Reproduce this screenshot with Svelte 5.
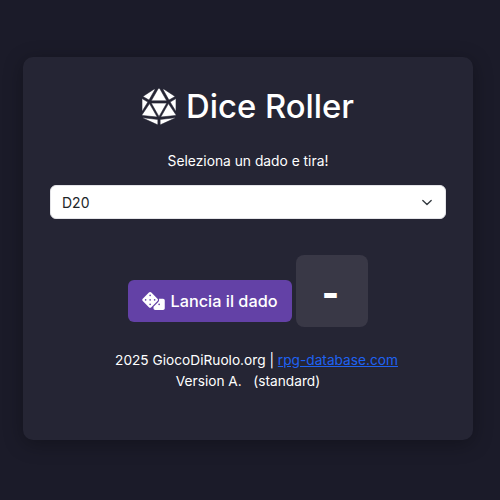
<script>
  let die = $state('D20');
  const dice = ['D4', 'D6', 'D8', 'D10', 'D12', 'D20', 'D100'];
</script>

<main class="page">
  <section class="card">
    <h1>
      <svg class="logo" viewBox="0 0 480 512" aria-hidden="true"><path fill="currentColor" stroke="#252534" stroke-width="8" d="M106.75 215.06L1.2 370.95c-3.08 5 .1 11.5 5.93 12.14l208.26 22.07-108.64-190.1zM7.41 315.43L82.7 193.08 6.06 147.1c-2.67-1.6-6.06.32-6.06 3.43v162.81c0 4.03 5.29 5.53 7.41 2.09zM18.25 423.6l194.4 87.66c5.3 2.45 11.35-1.43 11.35-7.26v-65.67l-203.55-22.3c-4.45-.5-6.23 5.59-2.2 7.57zm81.22-257.78L179.4 22.88c4.34-7.06-3.59-15.25-10.78-11.14L17.81 110.35c-2.47 1.62-2.39 5.26.13 6.78l81.53 48.69zM240 176h109.21L253.63 7.62C250.5 2.54 245.25 0 240 0s-10.5 2.54-13.63 7.62L130.79 176H240zm233.94-28.9l-76.64 45.99 75.29 122.35c2.11 3.44 7.41 1.94 7.41-2.1V150.53c0-3.11-3.39-5.03-6.06-3.43zm-93.41 18.72l81.53-48.7c2.53-1.52 2.6-5.16.13-6.78L311.38 11.74c-7.19-4.11-15.12 4.08-10.78 11.14l79.93 142.94zm-7.28 49.24l-108.64 190.1 208.26-22.07c5.83-.65 9.01-7.14 5.93-12.14L373.25 215.06zM256 438.33V504c0 5.83 6.05 9.71 11.35 7.26l194.4-87.66c4.03-1.98 2.25-8.07-2.2-7.57L256 438.33zM240 208H130.79L240 399.1 349.21 208H240z"/></svg>
      Dice Roller
    </h1>
    <p class="lead">Seleziona un dado e tira!</p>
    <select bind:value={die}>
      {#each dice as d}<option value={d}>{d}</option>{/each}
    </select>
    <div class="roll">
      <button type="button">
        <svg class="dice" viewBox="0 0 640 512" aria-hidden="true"><path fill="currentColor" d="M592 192H473.26c12.69 29.59 7.12 65.2-17 89.32L320 417.58V464c0 26.51 21.49 48 48 48h224c26.51 0 48-21.49 48-48V240c0-26.51-21.49-48-48-48zM480 376c-13.25 0-24-10.75-24-24 0-13.26 10.75-24 24-24s24 10.74 24 24c0 13.25-10.75 24-24 24zm-46.37-186.7L258.7 14.37c-19.16-19.16-50.23-19.16-69.39 0L14.37 189.3c-19.16 19.16-19.16 50.23 0 69.39L189.3 433.63c19.16 19.16 50.23 19.16 69.39 0L433.63 258.7c19.16-19.17 19.16-50.24 0-69.4zM96 248c-13.25 0-24-10.75-24-24 0-13.26 10.75-24 24-24s24 10.74 24 24c0 13.25-10.75 24-24 24zm128 128c-13.25 0-24-10.75-24-24 0-13.26 10.75-24 24-24s24 10.74 24 24c0 13.25-10.75 24-24 24zm0-128c-13.25 0-24-10.75-24-24 0-13.26 10.75-24 24-24s24 10.74 24 24c0 13.25-10.75 24-24 24zm0-128c-13.25 0-24-10.75-24-24 0-13.26 10.75-24 24-24s24 10.74 24 24c0 13.25-10.75 24-24 24zm128 128c-13.25 0-24-10.75-24-24 0-13.26 10.75-24 24-24s24 10.74 24 24c0 13.25-10.75 24-24 24z"/></svg>
        Lancia il dado
      </button>
      <output class="result">-</output>
    </div>
    <footer>
      <div class="credits">2025 GiocoDiRuolo.org | <a href="#top">rpg-database.com</a></div>
      <div>Version A. &nbsp; (standard)</div>
    </footer>
  </section>
</main>

<style>
  :global(body) {
    background: #1b1b29;
  }
  .page {
    box-sizing: border-box;
    height: 500px;
    padding: 57px 27px 0 23px;
    overflow: hidden;
    font-family: Inter, "Liberation Sans", sans-serif;
    color: #fff;
  }
  .card {
    box-sizing: border-box;
    height: 383px;
    padding: 26px 27px;
    background: #252534;
    border-radius: 10px;
    box-shadow: 0 4px 20px rgba(0, 0, 0, 0.3);
    text-align: center;
  }
  h1 {
    display: flex;
    justify-content: center;
    align-items: center;
    gap: 10px;
    margin: 0;
    height: 46px;
    font-size: 32.8px;
    font-weight: 500;
    line-height: 46px;
  }
  .logo {
    width: 34px;
    height: 37px;
  }
  .lead {
    margin: 22px 0 14px;
    font-size: 13.8px;
    line-height: 20px;
  }
  select {
    display: block;
    box-sizing: border-box;
    width: 100%;
    height: 34px;
    padding: 0 11px;
    border: 1px solid #e4e4e8;
    border-radius: 6px;
    background: #fff url("data:image/svg+xml,%3Csvg xmlns='http://www.w3.org/2000/svg' viewBox='0 0 12 8'%3E%3Cpath d='M1 1.5l5 5 5-5' fill='none' stroke='%23343a40' stroke-width='1.6' stroke-linecap='round' stroke-linejoin='round'/%3E%3C/svg%3E") no-repeat right 13px center / 10px 7px;
    appearance: none;
    font: 14px Inter, "Liberation Sans", sans-serif;
    color: #212529;
  }
  .roll {
    display: flex;
    justify-content: center;
    align-items: flex-end;
    gap: 4px;
    margin-top: 36px;
  }
  button {
    display: flex;
    align-items: center;
    gap: 5px;
    height: 42px;
    margin-bottom: 5px;
    padding: 0 14px;
    border: 0;
    border-radius: 6px;
    background: #6341a6;
    color: #fff;
    font: 500 16.3px Inter, "Liberation Sans", sans-serif;
  }
  .dice {
    width: 23px;
    height: 18px;
  }
  .result {
    box-sizing: border-box;
    width: 72px;
    height: 72px;
    padding-right: 2px;
    border-radius: 8px;
    background: #393846;
    font-size: 37px;
    font-weight: 800;
    line-height: 76px;
    text-align: center;
  }
  footer {
    margin-top: 23px;
    font-size: 13.7px;
    line-height: 21px;
  }
  .credits {
    padding-left: 17px;
  }
  a {
    color: #1f62f2;
  }
</style>
